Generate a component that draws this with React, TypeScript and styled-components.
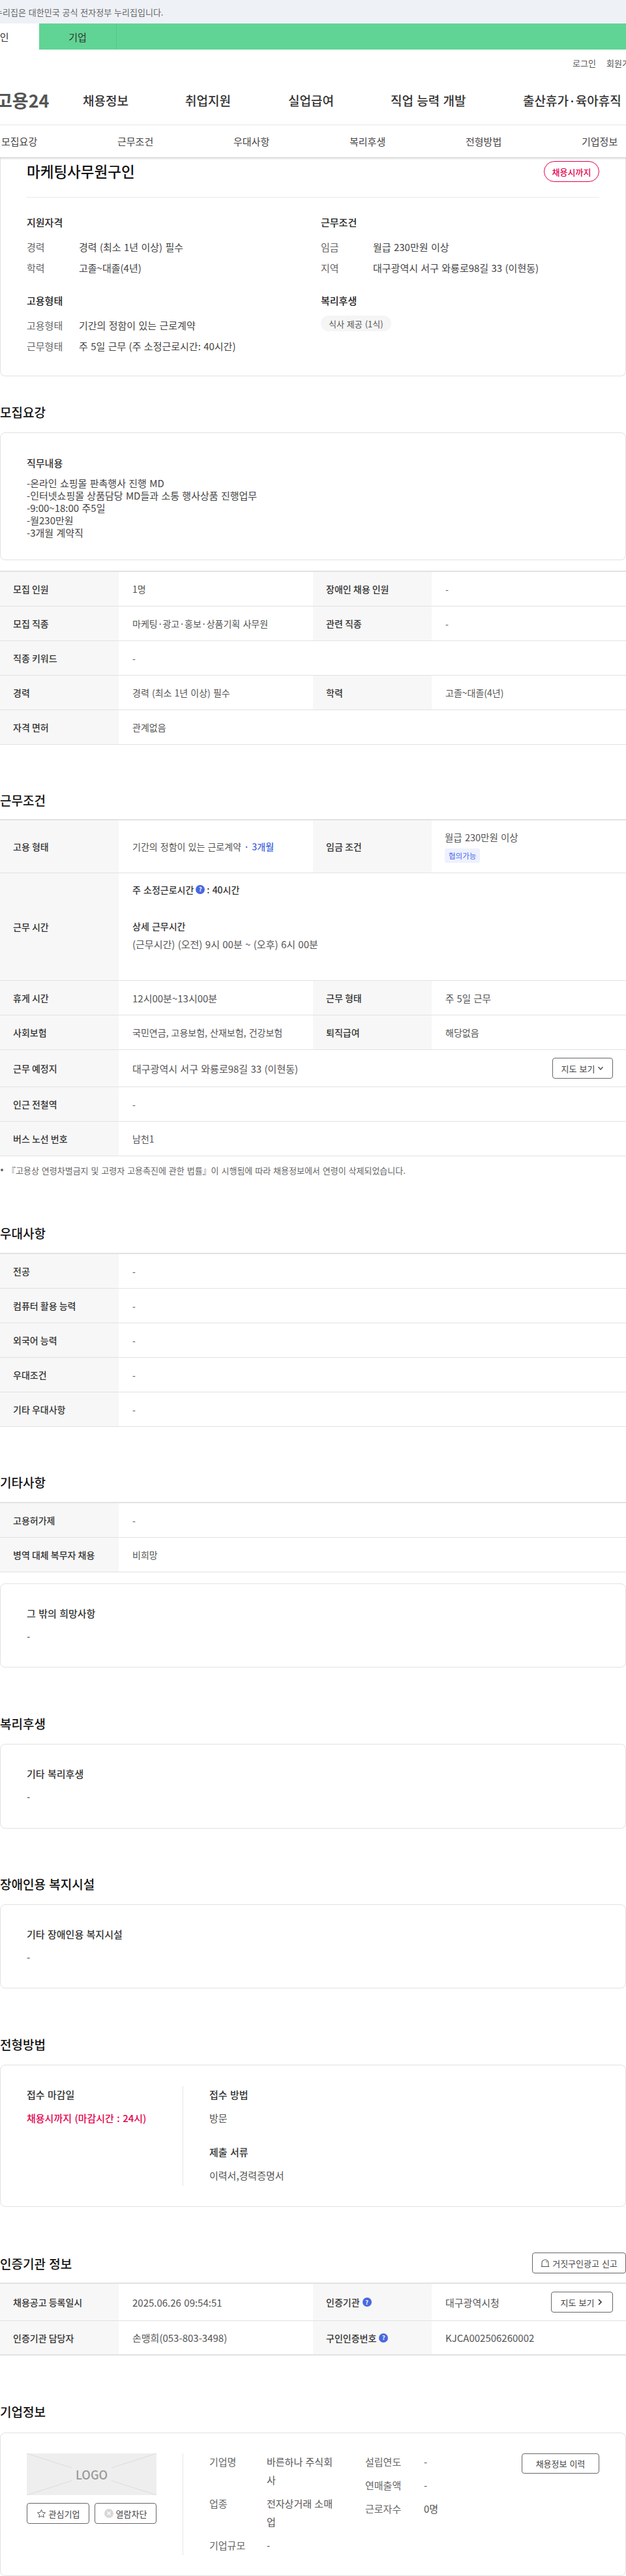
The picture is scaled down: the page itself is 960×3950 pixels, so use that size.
import React from "react";
import styled, { createGlobalStyle } from "styled-components";

const Global = createGlobalStyle`
  html, body { margin: 0; padding: 0; background: #fff; }
  body { width: 960px; overflow-x: hidden; font-family: "Noto Sans CJK KR", "Noto Sans", sans-serif; color: #222; word-spacing: 1px; }
  * { box-sizing: border-box; }
`;

const Page = styled.div`
  width: 960px;
  height: 3950px;
  overflow: hidden;
`;

const GovBar = styled.div`
  height: 36px;
  background: #eef1f6;
  display: flex;
  align-items: center;
  font-size: 13px;
  color: #666;
  overflow: hidden;
`;
const GovText = styled.span`
  margin-left: -8px;
  white-space: nowrap;
`;

const Audience = styled.div`
  height: 40px;
  background: #60d494;
  display: flex;
`;
const AudienceTab = styled.div<{ $active?: boolean }>`
  width: ${(p) => (p.$active ? 60 : 119)}px;
  background: ${(p) => (p.$active ? "#fff" : "transparent")};
  border-right: ${(p) => (p.$active ? "none" : "1px solid #56c888")};
  display: flex;
  align-items: center;
  justify-content: ${(p) => (p.$active ? "flex-start" : "center")};
  font-size: 15px;
  color: #333;
  overflow: hidden;
`;
const ClipText = styled.span`
  margin-left: -14px;
`;

const Util = styled.div`
  height: 40px;
  display: flex;
  justify-content: flex-end;
  align-items: center;
  gap: 16px;
  font-size: 13px;
  color: #555;
  overflow: hidden;
`;
const UtilClip = styled.div`
  width: 30px;
  overflow: hidden;
  white-space: nowrap;
`;

const MainNav = styled.nav`
  height: 76px;
  display: flex;
  align-items: center;
  border-bottom: 1px solid #e8e8e8;
  overflow: hidden;
`;
const Logo = styled.div`
  width: 127px;
  flex: none;
  font-size: 27px;
  font-weight: 700;
  color: #555;
  white-space: nowrap;
  overflow: hidden;
`;
const LogoText = styled.span`
  display: block;
  margin-left: -6px;
`;
const NavItem = styled.div<{ $w: number }>`
  width: ${(p) => p.$w}px;
  flex: none;
  font-size: 19px;
  font-weight: 500;
  color: #333;
  white-space: nowrap;
`;

const Tabs = styled.div`
  height: 49px;
  display: grid;
  grid-template-columns: repeat(6, 178px);
  align-items: center;
  padding-left: 2px;
  font-size: 15px;
  color: #444;
  box-shadow: 0 2px 3px rgba(0, 0, 0, 0.18);
  position: relative;
  background: #fff;
  white-space: nowrap;
`;

const Card = styled.div<{ $h: number; $mt?: number }>`
  height: ${(p) => p.$h}px;
  margin-top: ${(p) => p.$mt ?? 0}px;
  border: 1px solid #e2e2e2;
  border-radius: 8px;
  background: #fff;
`;
const SummaryCard = styled(Card)`
  border-top: none;
  border-radius: 0 0 8px 8px;
  padding: 0 40px;
`;
const TitleRow = styled.div`
  height: 62px;
  display: flex;
  justify-content: space-between;
  align-items: flex-start;
  padding-top: 6px;
  border-bottom: 1px solid #eaeaea;
`;
const JobTitle = styled.h1`
  margin: 0;
  font-size: 22.5px;
  line-height: 30px;
  font-weight: 500;
  color: #111;
`;
const Badge = styled.div`
  width: 85px;
  height: 32px;
  border: 1px solid #e6004d;
  border-radius: 16px;
  color: #e6004d;
  font-size: 13px;
  font-weight: 500;
  display: flex;
  align-items: center;
  justify-content: center;
`;
const SummaryGrid = styled.div`
  display: grid;
  grid-template-columns: 451px 1fr;
  grid-template-rows: 120px 1fr;
  padding-top: 27px;
`;
const SumHead = styled.div`
  font-size: 15px;
  font-weight: 500;
  line-height: 22px;
  color: #222;
  margin-bottom: 10px;
`;
const SumRow = styled.div`
  display: flex;
  height: 32px;
  align-items: center;
  font-size: 15px;
  color: #444;
`;
const SumLabel = styled.span`
  width: 80px;
  flex: none;
  color: #666;
`;
const Chip = styled.div`
  display: inline-flex;
  align-items: center;
  height: 24px;
  margin-top: 2px;
  padding: 0 12px;
  border-radius: 12px;
  background: #f5f5f5;
  font-size: 13px;
  color: #555;
`;

const SectionTitle = styled.h2<{ $mt: number; $mb: number }>`
  margin: ${(p) => p.$mt}px 0 ${(p) => p.$mb}px;
  font-size: 19px;
  line-height: 26px;
  font-weight: 500;
  color: #111;
`;
const SectionHeadRow = styled.div`
  display: flex;
  justify-content: space-between;
  align-items: center;
  height: 32px;
  margin-top: 70px;
`;
const HeadText = styled.h2`
  margin: 0;
  font-size: 19px;
  font-weight: 500;
  color: #111;
`;

const CardInner = styled.div<{ $pt: number }>`
  padding: ${(p) => p.$pt}px 40px 0;
`;
const CardHead = styled.div`
  font-size: 15px;
  line-height: 22px;
  font-weight: 500;
  color: #333;
`;
const CardLines = styled.div`
  margin-top: 10px;
  font-size: 15px;
  line-height: 19px;
  color: #444;
`;
const CardDash = styled.div`
  margin-top: 14px;
  font-size: 15px;
  line-height: 20px;
  color: #444;
`;

const Table = styled.div<{ $mt?: number }>`
  margin-top: ${(p) => p.$mt ?? 0}px;
  border-top: 2px solid #e2e2e2;
`;
const Row = styled.div<{ $h: number; $heavy?: boolean }>`
  height: ${(p) => p.$h}px;
  display: grid;
  grid-template-columns: 182px 298px 182px 298px;
  border-bottom: ${(p) => (p.$heavy ? "2px" : "1px")} solid #e2e2e2;
`;
const Th = styled.div`
  background: #f7f7f7;
  display: flex;
  align-items: center;
  gap: 4px;
  padding-left: 20px;
  font-size: 14px;
  font-weight: 500;
  word-spacing: 0;
  color: #333;
`;
const Td = styled.div<{ $span?: boolean; $fs?: number }>`
  grid-column: ${(p) => (p.$span ? "span 3" : "auto")};
  display: flex;
  align-items: center;
  justify-content: space-between;
  padding: 0 20px 0 21px;
  font-size: ${(p) => p.$fs ?? 14}px;
  color: #555;
`;
const TdStack = styled.div`
  grid-column: span 3;
  padding: 0 21px;
  font-size: 14px;
  color: #555;
`;
const TdCol = styled.div`
  display: flex;
  flex-direction: column;
  justify-content: center;
  align-items: flex-start;
  padding-left: 20px;
  font-size: 14.5px;
  line-height: 22px;
  color: #555;
`;
const StrongLine = styled.div<{ $mt: number }>`
  margin-top: ${(p) => p.$mt}px;
  line-height: 22px;
  font-weight: 500;
  color: #333;
  display: flex;
  align-items: center;
  gap: 3px;
`;
const PlainLine = styled.div`
  margin-top: 6px;
  font-size: 15px;
  line-height: 22px;
`;
const Blue = styled.span`
  color: #3f66e0;
  font-weight: 500;
`;
const Nego = styled.span`
  margin-top: 6px;
  padding: 0 6px;
  height: 22px;
  display: inline-flex;
  align-items: center;
  background: #eef1fe;
  border-radius: 3px;
  font-size: 11.5px;
  color: #4a6ae8;
`;
const Help = styled.span`
  width: 14px;
  height: 14px;
  flex: none;
  border-radius: 50%;
  background: #4a68e0;
  color: #fff;
  font-size: 9px;
  font-weight: 700;
  display: inline-flex;
  align-items: center;
  justify-content: center;
`;
const Button = styled.div<{ $w: number; $h?: number }>`
  width: ${(p) => p.$w}px;
  height: ${(p) => p.$h ?? 32}px;
  flex: none;
  border: 1px solid #666;
  border-radius: 4px;
  background: #fff;
  display: inline-flex;
  align-items: center;
  justify-content: center;
  gap: 4px;
  font-size: 13px;
  color: #444;
  white-space: nowrap;
`;
const Note = styled.div`
  margin-top: 11px;
  height: 20px;
  display: flex;
  align-items: center;
  gap: 6px;
  font-size: 13px;
  color: #666;
`;
const Dot = styled.span`
  width: 4px;
  height: 4px;
  margin-left: 1px;
  border-radius: 50%;
  background: #666;
`;

const ProcessCard = styled(Card)`
  padding: 32px 40px 0;
  display: flex;
`;
const ProcessLeft = styled.div`
  width: 240px;
  height: 153px;
  padding-top: 2px;
  border-right: 1px solid #e5e5e5;
`;
const ProcessRight = styled.div`
  padding: 2px 0 0 40px;
`;
const FieldHead = styled.div<{ $mt?: number }>`
  margin-top: ${(p) => p.$mt ?? 0}px;
  font-size: 15px;
  line-height: 22px;
  font-weight: 500;
  color: #333;
`;
const FieldValue = styled.div<{ $pink?: boolean }>`
  margin-top: 14px;
  font-size: 15px;
  line-height: 22px;
  font-weight: ${(p) => (p.$pink ? 500 : 400)};
  color: ${(p) => (p.$pink ? "#e6004d" : "#555")};
`;

const CompanyCard = styled(Card)`
  padding: 31px 40px 0;
  display: flex;
`;
const CompanyLeft = styled.div`
  width: 240px;
  height: 156px;
  border-right: 1px solid #e5e5e5;
  flex: none;
`;
const LogoBox = styled.div`
  width: 199px;
  height: 64px;
  background: #eeeeee;
  position: relative;
  display: flex;
  align-items: center;
  justify-content: center;
  font-size: 18px;
  font-weight: 500;
  color: #999;
`;
const LogoLines = styled.svg`
  position: absolute;
  inset: 0;
  width: 100%;
  height: 100%;
`;
const LogoLabel = styled.span`
  position: relative;
  background: #eee;
  padding: 0 6px;
`;
const CompanyButtons = styled.div`
  margin-top: 12px;
  width: 199px;
  display: flex;
  justify-content: space-between;
`;
const InfoA = styled.div`
  margin: -1px 0 0 40px;
  width: 239px;
  flex: none;
  display: grid;
  grid-template-columns: 88px 102px;
  row-gap: 8px;
  font-size: 15px;
  line-height: 28px;
  align-content: start;
`;
const InfoB = styled.div`
  margin-top: -1px;
  width: 240px;
  flex: none;
  display: grid;
  grid-template-columns: 90px 1fr;
  grid-auto-rows: 28px;
  row-gap: 8px;
  font-size: 15px;
  line-height: 28px;
  align-content: start;
`;
const InfoLabel = styled.div`
  color: #666;
`;
const InfoValue = styled.div`
  color: #555;
  word-break: break-all;
`;

const rows1 = [
  ["모집 인원", "1명", "장애인 채용 인원", "-"],
  ["모집 직종", "마케팅·광고·홍보·상품기획 사무원", "관련 직종", "-"],
];

const Star = () => (
  <svg width="15" height="15" viewBox="0 0 24 24" fill="none" stroke="#555" strokeWidth="1.6" strokeLinejoin="round">
    <path d="M12 2.500l2.900 6.200 6.800.8-5 4.600 1.300 6.700L12 17.500l-6 3.300 1.300-6.700-5-4.600 6.800-.8z" />
  </svg>
);
const BlockIcon = () => (
  <svg width="14" height="14" viewBox="0 0 14 14">
    <circle cx="7" cy="7" r="7" fill="#d8d8d8" />
    <path d="M4.500 4.500l5 5M9.500 4.500l-5 5" stroke="#fff" strokeWidth="1.200" />
  </svg>
);
const Bell = () => (
  <svg width="14" height="14" viewBox="0 0 14 14" fill="none" stroke="#555" strokeWidth="1.100">
    <path d="M2 12.500V7a5 5 0 0 1 10 0v5.500" />
    <path d="M.8 12.500h12.400" />
    <path d="M8.500 4.500a2.500 2.500 0 0 1 1 1.800" />
  </svg>
);
const ChevronDown = () => (
  <svg width="10" height="10" viewBox="0 0 10 10" fill="none" stroke="#444" strokeWidth="1.200">
    <path d="M1.500 3l3.500 4 3.500-4" />
  </svg>
);
const ChevronRight = () => (
  <svg width="10" height="12" viewBox="0 0 10 12" fill="none" stroke="#333" strokeWidth="1.600">
    <path d="M3 2l4 4-4 4" />
  </svg>
);

export default function App() {
  return (
    <Page>
      <Global />
      <GovBar><GovText>누리집은 대한민국 공식 전자정부 누리집입니다.</GovText></GovBar>
      <Audience>
        <AudienceTab $active><ClipText>개인</ClipText></AudienceTab>
        <AudienceTab>기업</AudienceTab>
      </Audience>
      <Util>
        <span>로그인</span>
        <UtilClip>회원가입</UtilClip>
      </Util>
      <MainNav>
        <Logo><LogoText>고용24</LogoText></Logo>
        <NavItem $w={157}>채용정보</NavItem>
        <NavItem $w={158}>취업지원</NavItem>
        <NavItem $w={157}>실업급여</NavItem>
        <NavItem $w={203}>직업 능력 개발</NavItem>
        <NavItem $w={158}>출산휴가·육아휴직</NavItem>
      </MainNav>
      <Tabs>
        <span>모집요강</span><span>근무조건</span><span>우대사항</span><span>복리후생</span><span>전형방법</span><span>기업정보</span>
      </Tabs>

      <SummaryCard $h={336}>
        <TitleRow>
          <JobTitle>마케팅사무원구인</JobTitle>
          <Badge>채용시까지</Badge>
        </TitleRow>
        <SummaryGrid>
          <div>
            <SumHead>지원자격</SumHead>
            <SumRow><SumLabel>경력</SumLabel>경력 (최소 1년 이상) 필수</SumRow>
            <SumRow><SumLabel>학력</SumLabel>고졸~대졸(4년)</SumRow>
          </div>
          <div>
            <SumHead>근무조건</SumHead>
            <SumRow><SumLabel>임금</SumLabel>월급 230만원 이상</SumRow>
            <SumRow><SumLabel>지역</SumLabel>대구광역시 서구 와룡로98길 33 (이현동)</SumRow>
          </div>
          <div>
            <SumHead>고용형태</SumHead>
            <SumRow><SumLabel>고용형태</SumLabel>기간의 정함이 있는 근로계약</SumRow>
            <SumRow><SumLabel>근무형태</SumLabel>주 5일 근무 (주 소정근로시간: 40시간)</SumRow>
          </div>
          <div>
            <SumHead>복리후생</SumHead>
            <Chip>식사 제공 (1식)</Chip>
          </div>
        </SummaryGrid>
      </SummaryCard>

      <SectionTitle $mt={42} $mb={18}>모집요강</SectionTitle>
      <Card $h={196}>
        <CardInner $pt={35}>
          <CardHead>직무내용</CardHead>
          <CardLines>
            -온라인 쇼핑몰 판촉행사 진행 MD<br />
            -인터넷쇼핑몰 상품담당 MD들과 소통 행사상품 진행업무<br />
            -9:00~18:00 주5일<br />
            -월230만원<br />
            -3개월 계약직
          </CardLines>
        </CardInner>
      </Card>
      <Table $mt={16}>
        {rows1.map((r) => (
          <Row key={r[0]} $h={53}>
            <Th>{r[0]}</Th><Td>{r[1]}</Td><Th>{r[2]}</Th><Td>{r[3]}</Td>
          </Row>
        ))}
        <Row $h={53}><Th>직종 키워드</Th><Td $span>-</Td></Row>
        <Row $h={53}><Th>경력</Th><Td>경력 (최소 1년 이상) 필수</Td><Th>학력</Th><Td>고졸~대졸(4년)</Td></Row>
        <Row $h={53}><Th>자격 면허</Th><Td $span>관계없음</Td></Row>
      </Table>

      <SectionTitle $mt={72} $mb={16}>근무조건</SectionTitle>
      <Table>
        <Row $h={81}>
          <Th>고용 형태</Th>
          <Td>
            <span>기간의 정함이 있는 근로계약 <Blue>· 3개월</Blue></span>
          </Td>
          <Th>임금 조건</Th>
          <TdCol>
            <span>월급 230만원 이상</span>
            <Nego>협의가능</Nego>
          </TdCol>
        </Row>
        <Row $h={165}>
          <Th>근무 시간</Th>
          <TdStack>
            <StrongLine $mt={14}>주 소정근로시간 <Help>?</Help>: 40시간</StrongLine>
            <StrongLine $mt={34}>상세 근무시간</StrongLine>
            <PlainLine>(근무시간) (오전) 9시 00분 ~ (오후) 6시 00분</PlainLine>
          </TdStack>
        </Row>
        <Row $h={53}><Th>휴게 시간</Th><Td $fs={15}>12시00분~13시00분</Td><Th>근무 형태</Th><Td $fs={14.5}>주 5일 근무</Td></Row>
        <Row $h={53}><Th>사회보험</Th><Td>국민연금, 고용보험, 산재보험, 건강보험</Td><Th>퇴직급여</Th><Td>해당없음</Td></Row>
        <Row $h={57}><Th>근무 예정지</Th><Td $span $fs={15}>대구광역시 서구 와룡로98길 33 (이현동)<Button $w={93}>지도 보기 <ChevronDown /></Button></Td></Row>
        <Row $h={53}><Th>인근 전철역</Th><Td $span>-</Td></Row>
        <Row $h={53}><Th>버스 노선 번호</Th><Td $span>남천1</Td></Row>
      </Table>
      <Note><Dot />『고용상 연령차별금지 및 고령자 고용촉진에 관한 법률』이 시행됨에 따라 채용정보에서 연령이 삭제되었습니다.</Note>

      <SectionTitle $mt={74} $mb={17}>우대사항</SectionTitle>
      <Table>
        <Row $h={53}><Th>전공</Th><Td $span>-</Td></Row>
        <Row $h={53}><Th>컴퓨터 활용 능력</Th><Td $span>-</Td></Row>
        <Row $h={53}><Th>외국어 능력</Th><Td $span>-</Td></Row>
        <Row $h={53}><Th>우대조건</Th><Td $span>-</Td></Row>
        <Row $h={53}><Th>기타 우대사항</Th><Td $span>-</Td></Row>
      </Table>

      <SectionTitle $mt={72} $mb={17}>기타사항</SectionTitle>
      <Table>
        <Row $h={53}><Th>고용허가제</Th><Td $span>-</Td></Row>
        <Row $h={53}><Th>병역 대체 복무자 채용</Th><Td $span>비희망</Td></Row>
      </Table>
      <Card $h={129} $mt={17}>
        <CardInner $pt={34}>
          <CardHead>그 밖의 희망사항</CardHead>
          <CardDash>-</CardDash>
        </CardInner>
      </Card>

      <SectionTitle $mt={73} $mb={18}>복리후생</SectionTitle>
      <Card $h={130}>
        <CardInner $pt={34}>
          <CardHead>기타 복리후생</CardHead>
          <CardDash>-</CardDash>
        </CardInner>
      </Card>

      <SectionTitle $mt={72} $mb={18}>장애인용 복지시설</SectionTitle>
      <Card $h={129}>
        <CardInner $pt={34}>
          <CardHead>기타 장애인용 복지시설</CardHead>
          <CardDash>-</CardDash>
        </CardInner>
      </Card>

      <SectionTitle $mt={73} $mb={18}>전형방법</SectionTitle>
      <ProcessCard $h={218}>
        <ProcessLeft>
          <FieldHead>접수 마감일</FieldHead>
          <FieldValue $pink>채용시까지 (마감시간 : 24시)</FieldValue>
        </ProcessLeft>
        <ProcessRight>
          <FieldHead>접수 방법</FieldHead>
          <FieldValue>방문</FieldValue>
          <FieldHead $mt={30}>제출 서류</FieldHead>
          <FieldValue>이력서,경력증명서</FieldValue>
        </ProcessRight>
      </ProcessCard>

      <SectionHeadRow>
        <HeadText>인증기관 정보</HeadText>
        <Button $w={144}><Bell /> 거짓구인광고 신고</Button>
      </SectionHeadRow>
      <Table $mt={14}>
        <Row $h={57}>
          <Th>채용공고 등록일시</Th><Td $fs={15}>2025.06.26 09:54:51</Td>
          <Th>인증기관 <Help>?</Help></Th>
          <Td $fs={15}>대구광역시청<Button $w={95}>지도 보기 <ChevronRight /></Button></Td>
        </Row>
        <Row $h={53} $heavy>
          <Th>인증기관 담당자</Th><Td $fs={15}>손맹희(053-803-3498)</Td>
          <Th>구인인증번호 <Help>?</Help></Th><Td $fs={15}>KJCA002506260002</Td>
        </Row>
      </Table>

      <SectionTitle $mt={73} $mb={19}>기업정보</SectionTitle>
      <CompanyCard $h={220}>
        <CompanyLeft>
          <LogoBox>
            <LogoLines viewBox="0 0 199 64" preserveAspectRatio="none">
              <path d="M0 0L199 64M199 0L0 64" stroke="#dcdcdc" strokeWidth="1" />
            </LogoLines>
            <LogoLabel>LOGO</LogoLabel>
          </LogoBox>
          <CompanyButtons>
            <Button $w={96}><Star /> 관심기업</Button>
            <Button $w={95}><BlockIcon /> 열람차단</Button>
          </CompanyButtons>
        </CompanyLeft>
        <InfoA>
          <InfoLabel>기업명</InfoLabel><InfoValue>바른하나 주식회사</InfoValue>
          <InfoLabel>업종</InfoLabel><InfoValue>전자상거래 소매업</InfoValue>
          <InfoLabel>기업규모</InfoLabel><InfoValue>-</InfoValue>
        </InfoA>
        <InfoB>
          <InfoLabel>설립연도</InfoLabel><InfoValue>-</InfoValue>
          <InfoLabel>연매출액</InfoLabel><InfoValue>-</InfoValue>
          <InfoLabel>근로자수</InfoLabel><InfoValue>0명</InfoValue>
        </InfoB>
        <Button $w={119} $h={31}>채용정보 이력</Button>
      </CompanyCard>
    </Page>
  );
}
